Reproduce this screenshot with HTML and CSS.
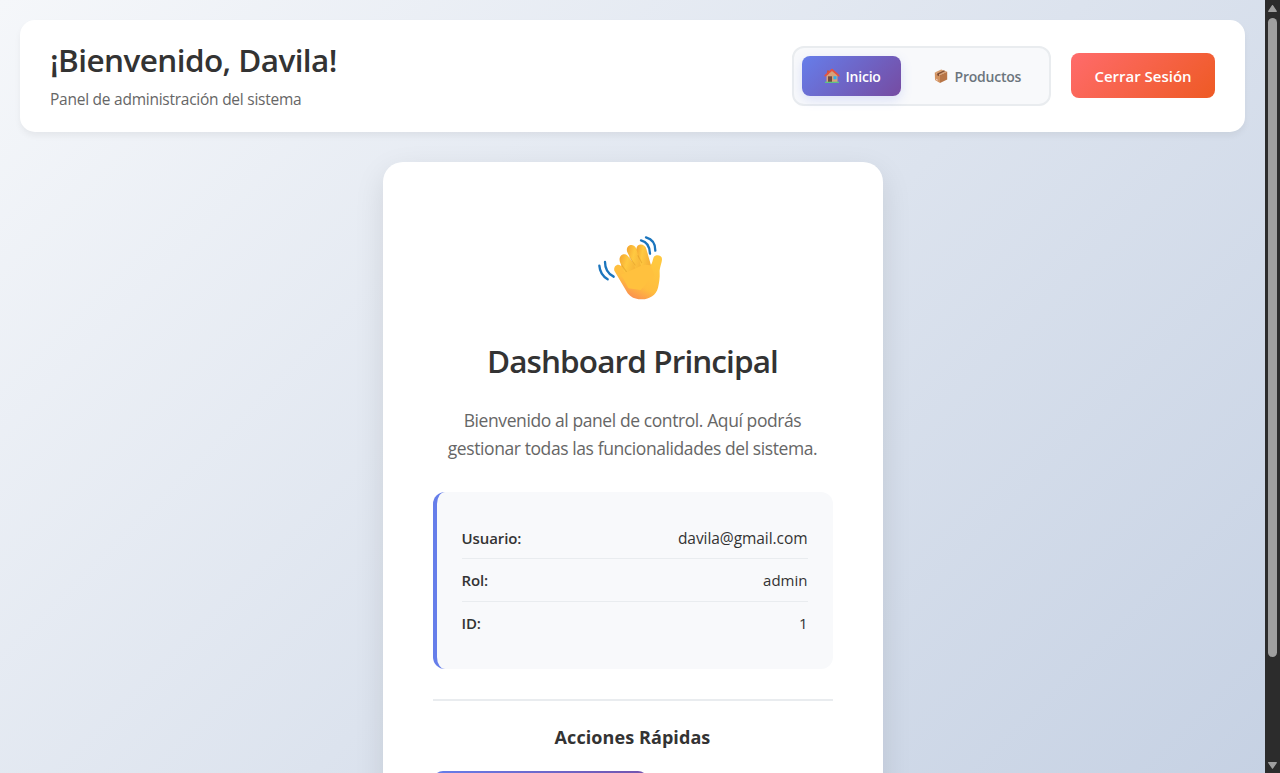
FILE: index.html
```html
<!DOCTYPE html>
<html lang="es">
<head>
<meta charset="utf-8">
<title>Dashboard</title>
<link rel="stylesheet" href="styles.css">
</head>
<body>
<div class="page">
  <header class="header">
    <div class="welcome">
      <h1 class="welcome-title">¡Bienvenido, Davila!</h1>
      <p class="welcome-sub">Panel de administración del sistema</p>
    </div>
    <nav class="nav">
      <a class="nav-link active">
        <svg class="nav-icon" viewBox="0 0 16 16">
          <path d="M2.5 7 8 2.2 13.5 7v7.3h-11z" fill="#d8a27b"/>
          <path d="M3 2.5h2v3.2L3 7z" fill="#c4573d"/>
          <path d="M1.3 7.6 8 1.7l6.7 5.9" fill="none" stroke="#e5533f" stroke-width="1.8" stroke-linecap="round" stroke-linejoin="round"/>
          <path d="M4 8.3h4v5.8H4z" fill="#704b40"/>
          <path d="M9.5 8.2h3v3.1h-3z" fill="#2bb3ef"/>
          <path d="M1 13.7h14V15H1z" fill="#5dc385"/>
        </svg>
        <span>Inicio</span>
      </a>
      <a class="nav-link second">
        <svg class="nav-icon" viewBox="0 0 16 16">
          <path d="m1.8 4.4 6.4-2.9 6 2.2-7.2 3.2z" fill="#d8a071"/>
          <path d="M1.8 4.4 7 6.9v8L2 12z" fill="#d2925f"/>
          <path d="m7 6.9 7.2-3.2v7.8L7 14.9z" fill="#b87647"/>
          <path d="m4.2 5.4 6.6-3 1.5.6L6 6.2v2L4.2 7.3z" fill="#7d4c33"/>
          <path d="m2.8 10.5 1.9 1v1.3l-1.9-1z" fill="#efc8ba"/>
        </svg>
        <span>Productos</span>
      </a>
    </nav>
    <button class="logout">Cerrar Sesión</button>
  </header>

  <main class="card">
    <svg class="wave" viewBox="0 0 285 255">
      <defs>
        <linearGradient id="skin" x1="0.75" y1="0.1" x2="0.25" y2="1">
          <stop offset="0" stop-color="#ffc83f"/>
          <stop offset=".6" stop-color="#ffbd3e"/>
          <stop offset="1" stop-color="#f98455"/>
        </linearGradient>
        <linearGradient id="finger" x1="0" y1="0" x2="1" y2=".35">
          <stop offset="0" stop-color="#f3a32f"/>
          <stop offset=".45" stop-color="#ffc941"/>
          <stop offset="1" stop-color="#f5b036"/>
        </linearGradient>
      </defs>
      <path d="M88 137C85 123 98 115 107 122L180 105 197 121C202 116 203 104 206 97 212 87 231 90 231 102 231 115 223 127 224 143 225 158 222 174 219 188 213 211 194 222 171 223 151 224 138 217 128 205Z" fill="url(#skin)"/>
      <path d="M106 114C97 94 115 80 128 92L160 133 136 158 116 138Z" fill="url(#finger)"/>
      <path d="M127 82C119 60 145 52 153 69L180 113 156 139Z" fill="url(#finger)"/>
      <path d="M155 76C150 54 180 52 184 72L198 121 174 145Z" fill="url(#finger)"/>
      <path d="m110 120 14 20M133 96l17 24M159 92l11 21" fill="none" stroke="#d58b21" stroke-width="3.5" stroke-linecap="round" opacity=".4"/>
      <path d="M108 148C124 142 136 137 147 132Q165 123 178 119L197 121 207 150 167 195 130 190Z" fill="#ffc13e"/>
      <g fill="none" stroke="#1b75bd" stroke-width="7" stroke-linecap="round">
        <path d="M43 122Q45 149 68 163"/>
        <path d="M60 111Q60 142 86 155"/>
        <path d="M168 46Q194 52 195 86"/>
        <path d="M183 37Q212 45 211 77"/>
      </g>
    </svg>
    <h2 class="card-title">Dashboard Principal</h2>
    <p class="card-text">Bienvenido al panel de control. Aquí podrás<br>gestionar todas las funcionalidades del sistema.</p>
    <div class="info">
      <div class="row"><strong>Usuario:</strong><span class="mail">davila@gmail.com</span></div>
      <div class="row"><strong>Rol:</strong><span>admin</span></div>
      <div class="row"><strong>ID:</strong><span>1</span></div>
    </div>
    <section class="actions">
      <h3 class="actions-title">Acciones Rápidas</h3>
      <div class="action-button"></div>
    </section>
  </main>
</div>
<div class="scrollbar">
  <svg class="arrow" viewBox="0 0 15 18"><path d="M7.5 5.6 11.3 11.3H3.7Z" fill="#9f9f9f" stroke="#9f9f9f" stroke-width="1.2" stroke-linejoin="round"/></svg>
  <div class="thumb"></div>
  <svg class="arrow down" viewBox="0 0 15 18"><path d="M3.7 7.6H11.3L7.5 13.2Z" fill="#9f9f9f" stroke="#9f9f9f" stroke-width="1.2" stroke-linejoin="round"/></svg>
</div>
</body>
</html>
```
FILE: styles.css
```css
* { box-sizing: border-box; margin: 0; padding: 0; }
html { height: 100%; overflow: hidden; }
body {
  display: flex;
  height: 773px;
  overflow: hidden;
  font-family: "Open Sans", "Noto Sans", sans-serif;
  font-size: 16px;
  color: #333;
}
.page {
  width: 1265px;
  height: 773px;
  overflow: hidden;
  flex: none;
  padding: 20px 20px 0;
  background: linear-gradient(135deg, #f5f7fa 0%, #c3cfe2 100%) 0 0 / 1265px 905px no-repeat;
}
.header {
  display: flex;
  align-items: center;
  height: 112px;
  padding: 0 30px;
  margin-bottom: 30px;
  background: #fff;
  border-radius: 15px;
  box-shadow: 0 4px 6px rgba(0, 0, 0, .05);
}
h1, h2, h3, p, .nav-link, .logout, .row { white-space: nowrap; }
.welcome { flex: 1; }
.welcome-title { font-size: 31.5px; font-weight: 600; line-height: 43px; margin-top: -4px; letter-spacing: -.58px; }
.welcome-sub { font-size: 15.5px; line-height: 21px; margin-top: 8px; color: #666; letter-spacing: -.25px; }
.nav {
  display: flex;
  gap: 10px;
  width: 259px;
  height: 60px;
  padding: 8px;
  margin-right: 20px;
  background: #f8f9fb;
  border: 2px solid #e9ecef;
  border-radius: 12px;
}
.nav-link {
  display: flex;
  align-items: center;
  height: 40px;
  padding-left: 22px;
  gap: 5.5px;
  border-radius: 8px;
  color: #6c757d;
  font-size: 14px;
  font-weight: 600;
  letter-spacing: -.22px;
}
.active {
  width: 99px;
  color: #fff;
  background: linear-gradient(135deg, #667eea, #764ba2);
  box-shadow: 0 4px 12px rgba(102, 126, 234, .2);
}
.nav-icon { width: 16px; height: 16px; flex: none; }
.logout {
  width: 144px;
  height: 45px;
  margin-bottom: 2px;
  padding-top: 2px;
  border: 0;
  border-radius: 8px;
  background: linear-gradient(135deg, #ff6b6b, #ee5a24);
  color: #fff;
  font: 600 15px "Open Sans", "Noto Sans", sans-serif;
}
.card {
  width: 500px;
  height: 723px;
  margin: 0 auto;
  padding: 63px 50px 50px;
  background: #fff;
  border-radius: 20px;
  box-shadow: 0 10px 30px rgba(0, 0, 0, .1);
  text-align: center;
}
.wave { display: block; width: 95px; height: 85px; margin: 0 auto; }
.card-title { font-size: 31.5px; font-weight: 600; line-height: 43px; margin-top: 29px; letter-spacing: -.9px; }
.card-text { font-size: 17.5px; line-height: 28px; margin-top: 24px; color: #666; letter-spacing: -.41px; }
.info {
  height: 177px;
  margin-top: 30px;
  padding: 25px;
  background: #f8f9fb;
  border-left: 4px solid #667eea;
  border-radius: 12px;
}
.row {
  display: flex;
  justify-content: space-between;
  align-items: center;
  height: 42.4px;
  border-bottom: 1px solid #e9ecef;
  font-size: 15px;
}
.row:last-child { border-bottom: 0; }
.row strong { font-weight: 600; letter-spacing: -.1px; }
.row .mail { font-size: 15.5px; letter-spacing: -.06px; }
.actions { margin-top: 30px; border-top: 2px solid #e9ecef; }
.actions-title { font-size: 18px; font-weight: 700; line-height: 25px; margin-top: 24px; letter-spacing: .08px; }
.action-button {
  width: 215px;
  height: 45px;
  margin-top: 21px;
  border-radius: 10px;
  background: linear-gradient(135deg, #667eea, #764ba2);
}
.scrollbar {
  display: flex;
  flex-direction: column;
  align-items: center;
  width: 15px;
  height: 773px;
  background: #2c2c2c;
}
.thumb { width: 9px; height: 639px; border-radius: 5px; background: #9f9f9f; }
.arrow { display: block; width: 15px; height: 18px; flex: none; }
.down { margin-top: auto; }
```
